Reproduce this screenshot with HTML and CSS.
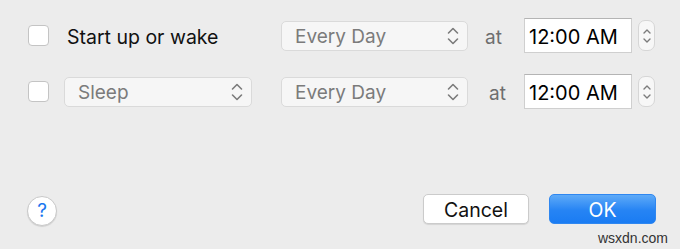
FILE: index.html
```html
<!DOCTYPE html>
<html>
<head>
<meta charset="utf-8">
<link rel="stylesheet" href="styles.css">
</head>
<body>
<div class="dialog">
  <div class="row">
    <span class="checkbox"></span>
    <span class="label">Start up or wake</span>
    <div class="popup wide2"><span>Every Day</span><svg class="chev" viewBox="0 0 12 20"><path d="M1.5 7 L6 2.5 L10.5 7 M1.5 13 L6 17.5 L10.5 13" fill="none" stroke="#7b7b7b" stroke-width="1.6" stroke-linecap="round" stroke-linejoin="round"/></svg></div>
    <span class="at">at</span>
    <div class="time">12:00 AM</div>
    <div class="stepper"><svg viewBox="0 0 10 18"><path d="M2 6 L5 3 L8 6 M2 12 L5 15 L8 12" fill="none" stroke="#7b7b7b" stroke-width="1.4" stroke-linecap="round" stroke-linejoin="round"/></svg></div>
  </div>
  <div class="row">
    <span class="checkbox"></span>
    <div class="popup first"><span>Sleep</span><svg class="chev" viewBox="0 0 12 20"><path d="M1.5 7 L6 2.5 L10.5 7 M1.5 13 L6 17.5 L10.5 13" fill="none" stroke="#7b7b7b" stroke-width="1.6" stroke-linecap="round" stroke-linejoin="round"/></svg></div>
    <div class="popup wide2"><span>Every Day</span><svg class="chev" viewBox="0 0 12 20"><path d="M1.5 7 L6 2.5 L10.5 7 M1.5 13 L6 17.5 L10.5 13" fill="none" stroke="#7b7b7b" stroke-width="1.6" stroke-linecap="round" stroke-linejoin="round"/></svg></div>
    <span class="at at2">at</span>
    <div class="time">12:00 AM</div>
    <div class="stepper"><svg viewBox="0 0 10 18"><path d="M2 6 L5 3 L8 6 M2 12 L5 15 L8 12" fill="none" stroke="#7b7b7b" stroke-width="1.4" stroke-linecap="round" stroke-linejoin="round"/></svg></div>
  </div>
  <div class="footer">
    <button class="help">?</button>
    <div class="actions">
      <button class="btn cancel">Cancel</button>
      <button class="btn ok">OK</button>
    </div>
  </div>
</div>
<div class="watermark">wsxdn.com</div>
</body>
</html>
```
FILE: styles.css
```css
html, body {
  margin: 0;
  padding: 0;
}
body {
  background: #ececec;
  font-family: Inter, "Liberation Sans", sans-serif;
  width: 680px;
  height: 249px;
  overflow: hidden;
  position: relative;
}
.dialog {
  padding: 18px 24px 0 28px;
}
.row {
  display: flex;
  align-items: center;
  height: 35px;
}
.row + .row {
  margin-top: 21px;
}
.checkbox {
  width: 19px;
  height: 19px;
  border: 1px solid #c4c4c4;
  border-radius: 4px;
  background: #ffffff;
  margin-right: 15px;
  flex: none;
}
.label {
  width: 185px;
  margin-left: 3px;
  margin-right: 29px;
  padding-top: 3px;
  font-size: 19.5px;
  color: #111;
}
.popup {
  box-sizing: border-box;
  height: 30px;
  border: 1px solid #dadada;
  border-radius: 5px;
  background: #f6f6f6;
  display: flex;
  align-items: center;
  justify-content: space-between;
  padding: 2px 8px 0 13px;
  font-size: 19px;
  color: #7b7b7b;
  flex: none;
}
.popup .chev {
  margin-top: -2px;
}
.popup.first {
  width: 188px;
  margin-right: 29px;
}
.popup.wide2 {
  width: 187px;
}
.chev {
  width: 12px;
  height: 20px;
}
.at {
  width: 56px;
  box-sizing: border-box;
  padding-left: 17px;
  padding-top: 3px;
  font-size: 19px;
  color: #6e6e6e;
  flex: none;
}
.at2 {
  padding-left: 21px;
}
.time {
  box-sizing: border-box;
  width: 108px;
  height: 35px;
  background: #fff;
  border: 1px solid #cfcfcf;
  border-top-color: #b4b4b4;
  display: flex;
  align-items: center;
  padding-left: 4px;
  padding-top: 2px;
  font-size: 20px;
  color: #000;
  flex: none;
}
.stepper {
  box-sizing: border-box;
  width: 17px;
  height: 31px;
  margin-left: 6px;
  border: 1px solid #d6d6d6;
  border-radius: 7px;
  background: #f7f7f7;
  display: flex;
  align-items: center;
  justify-content: center;
  flex: none;
}
.stepper svg {
  width: 10px;
  height: 18px;
}
.footer {
  margin-top: 85px;
  display: flex;
  align-items: center;
  justify-content: space-between;
  height: 30px;
}
.help {
  width: 30px;
  height: 30px;
  margin-left: -1px;
  margin-top: 3px;
  border-radius: 50%;
  border: 1px solid #c9c9c9;
  background: #fff;
  box-shadow: 0 1px 1px rgba(0,0,0,0.12);
  color: #1a77ef;
  font-family: Inter, "Liberation Sans", sans-serif;
  font-size: 19px;
  padding: 0;
  line-height: 28px;
}
.actions {
  display: flex;
  gap: 20px;
}
.btn {
  height: 30px;
  border-radius: 5px;
  font-family: Inter, "Liberation Sans", sans-serif;
  font-size: 19.5px;
  padding: 1px 0 0;
}
.cancel {
  width: 106px;
  background: #fff;
  border: 1px solid #cbcbcb;
  box-shadow: 0 1px 1px rgba(0,0,0,0.1);
  color: #111;
}
.ok {
  width: 107px;
  border: 1px solid #2f87f0;
  background: linear-gradient(#5eaaf8, #2684f4 55%, #1a7cf3);
  color: #fff;
}
.watermark {
  position: absolute;
  right: 12px;
  top: 230px;
  font-family: "Liberation Sans", sans-serif;
  font-size: 14px;
  color: #333;
}
```
